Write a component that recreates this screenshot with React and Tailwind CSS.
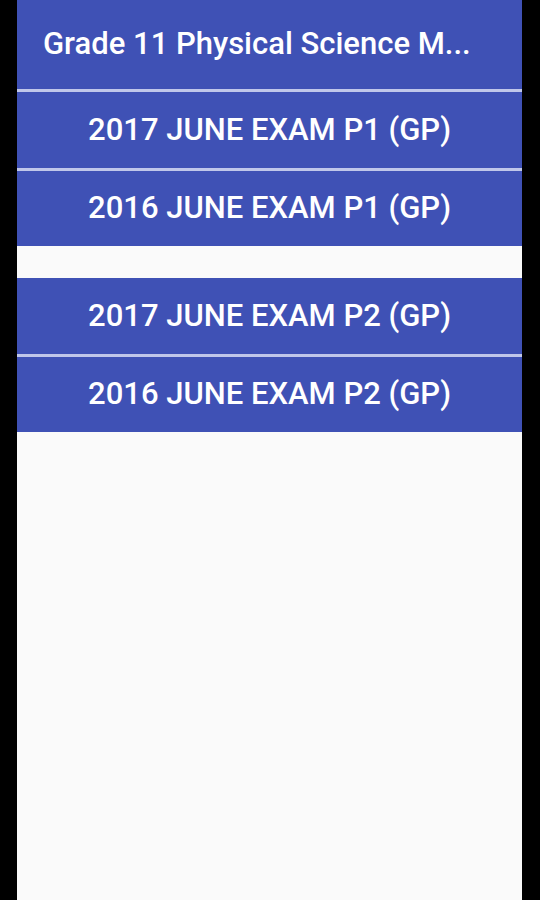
import React from "react";

const ExamButton = ({ label, divider }) => (
  <button
    type="button"
    className={`w-full bg-[#3f51b5] text-white text-[31px] font-medium flex items-center justify-center ${
      divider ? "h-[79px] border-b-[3px] border-[#c0c7ea]" : "h-[75px]"
    }`}
  >
    {label}
  </button>
);

export default function App() {
  return (
    <div className="min-h-screen bg-black pl-[17px] pr-[18px] font-['Roboto',sans-serif]">
      <div className="min-h-[900px] bg-[#fafafa]">
        {/* Toolbar */}
        <div className="h-[92px] bg-[#3f51b5] border-b-[3px] border-[#c0c7ea] flex items-center pl-[26px] pr-4">
          <h1 className="text-white text-[31px] font-medium whitespace-nowrap">
            Grade 11 Physical Science M...
          </h1>
        </div>

        {/* P1 */}
        <ExamButton label="2017 JUNE EXAM P1 (GP)" divider />
        <ExamButton label="2016 JUNE EXAM P1 (GP)" />

        <div className="h-[32px]" />

        {/* P2 */}
        <ExamButton label="2017 JUNE EXAM P2 (GP)" divider />
        <ExamButton label="2016 JUNE EXAM P2 (GP)" />
      </div>
    </div>
  );
}
